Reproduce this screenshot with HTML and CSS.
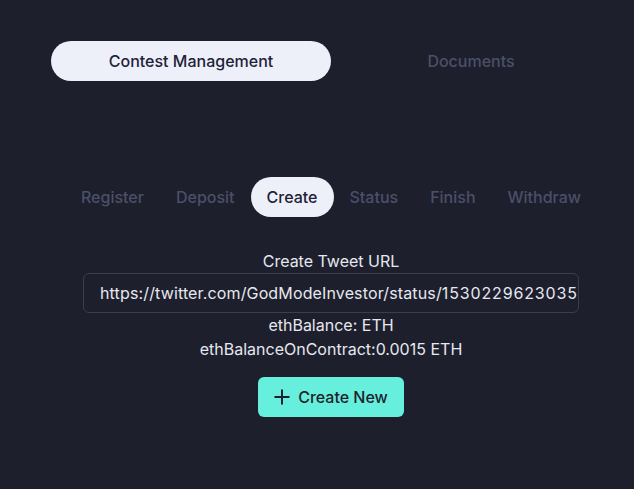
FILE: index.html
```html
<!DOCTYPE html>
<html>
<head>
<meta charset="utf-8">
<link rel="stylesheet" href="styles.css">
</head>
<body>
<div class="wrap">
  <nav class="main-tabs">
    <div class="main-tab active">Contest Management</div>
    <div class="main-tab">Documents</div>
  </nav>
  <nav class="sub-tabs">
    <div class="sub-tab">Register</div>
    <div class="sub-tab">Deposit</div>
    <div class="sub-tab active">Create</div>
    <div class="sub-tab">Status</div>
    <div class="sub-tab">Finish</div>
    <div class="sub-tab">Withdraw</div>
  </nav>
  <section class="form">
    <label class="label">Create Tweet URL</label>
    <div class="input"><span class="url">https://twitter.com/GodModeInvestor/status/<span class="num">1530229623035</span></span></div>
    <div class="info">ethBalance: ETH</div>
    <div class="info">ethBalanceOnContract:0.0015 ETH</div>
    <button class="btn">
      <svg width="16" height="16" viewBox="0 0 16 16" fill="none" stroke="#1d1f2c" stroke-width="2"><path d="M8 0.5V15.5M0.5 8H15.5"/></svg>
      <span>Create New</span>
    </button>
  </section>
</div>
</body>
</html>
```
FILE: styles.css
```css
html, body {
  margin: 0;
  padding: 0;
  background: #1d1f2c;
  font-family: Inter, "Noto Sans", sans-serif;
  font-size: 16px;
}
.wrap {
  width: 560px;
  margin-left: 51px;
  padding-top: 41px;
  display: flex;
  flex-direction: column;
  align-items: center;
}
.main-tabs {
  display: flex;
  width: 560px;
}
.main-tab {
  flex: 1;
  height: 40px;
  border-radius: 20px;
  display: flex;
  align-items: center;
  justify-content: center;
  font-weight: 500;
  color: #4b5068;
}
.main-tab.active {
  background: #edf0f8;
  color: #1f2238;
}
.sub-tabs {
  display: flex;
  margin-top: 96px;
}
.sub-tab {
  height: 40px;
  padding: 0 16px;
  border-radius: 20px;
  display: flex;
  align-items: center;
  font-weight: 500;
  color: #4b5068;
}
.sub-tab.active {
  background: #edf0f8;
  color: #1f2238;
}
.form {
  display: flex;
  flex-direction: column;
  align-items: center;
  margin-top: 32px;
  color: #e6e8ef;
}
.label {
  line-height: 24px;
}
.input {
  box-sizing: border-box;
  width: 496px;
  height: 40px;
  border: 1px solid #3b3e4c;
  border-radius: 6px;
  padding: 0 16px;
  display: flex;
  align-items: center;
  white-space: nowrap;
  overflow: hidden;
  color: #e6e8ef;
}
.url {
  letter-spacing: 0.14px;
}
.num {
  letter-spacing: 0.85px;
}
.info {
  line-height: 24px;
}
.btn {
  margin-top: 16px;
  height: 40px;
  padding: 0 16px;
  border: none;
  border-radius: 6px;
  background: #66efdc;
  display: flex;
  align-items: center;
  gap: 8px;
  font-family: inherit;
  font-size: 16px;
  font-weight: 500;
  color: #1d1f2c;
}
```
